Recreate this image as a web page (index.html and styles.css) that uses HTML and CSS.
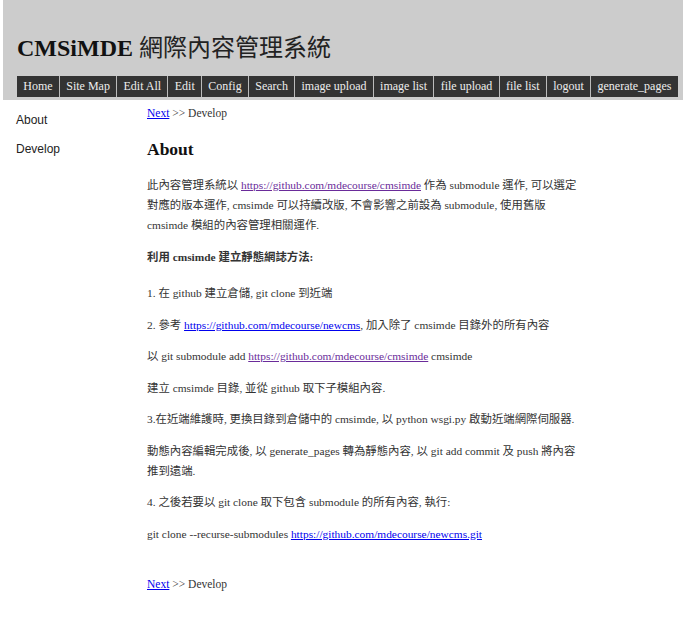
FILE: index.html
```html
<!DOCTYPE html>
<html lang="zh-Hant">
<head>
<meta charset="utf-8">
<title>CMSiMDE 網際內容管理系統</title>
<link rel="stylesheet" href="styles.css">
</head>
<body>
<div class="page">
  <header class="top">
    <h1 class="title">CMSiMDE <span class="title-cjk">網際內容管理系統</span></h1>
    <ul class="nav">
      <li><a href="#">Home</a></li>
      <li><a href="#">Site Map</a></li>
      <li><a href="#">Edit All</a></li>
      <li><a href="#">Edit</a></li>
      <li><a href="#">Config</a></li>
      <li><a href="#">Search</a></li>
      <li><a href="#">image upload</a></li>
      <li><a href="#">image list</a></li>
      <li><a href="#">file upload</a></li>
      <li><a href="#">file list</a></li>
      <li><a href="#">logout</a></li>
      <li><a href="#">generate_pages</a></li>
    </ul>
  </header>
  <div class="main">
    <aside class="side">
      <a class="side-link" href="#">About</a>
      <a class="side-link" href="#">Develop</a>
    </aside>
    <div class="content">
      <div class="pager"><a class="link" href="#">Next</a> &gt;&gt; Develop</div>
      <h2 class="heading">About</h2>
      <p class="para">此內容管理系統以 <a class="link visited" href="#">https://github.com/mdecourse/cmsimde</a> 作為 submodule 運作, 可以選定<br>對應的版本運作, cmsimde 可以持續改版, 不會影響之前設為 submodule, 使用舊版<br>cmsimde 模組的內容管理相關運作.</p>
      <p class="para strong">利用 cmsimde 建立靜態網誌方法:</p>
      <p class="para">1. 在 github 建立倉儲, git clone 到近端</p>
      <p class="para">2. 參考 <a class="link" href="#">https://github.com/mdecourse/newcms</a>, 加入除了 cmsimde 目錄外的所有內容</p>
      <p class="para">以 git submodule add <a class="link visited" href="#">https://github.com/mdecourse/cmsimde</a> cmsimde</p>
      <p class="para">建立 cmsimde 目錄, 並從 github 取下子模組內容.</p>
      <p class="para">3.在近端維護時, 更換目錄到倉儲中的 cmsimde, 以 python wsgi.py 啟動近端網際伺服器.</p>
      <p class="para">動態內容編輯完成後, 以 generate_pages 轉為靜態內容, 以 git add commit 及 push 將內容<br>推到遠端.</p>
      <p class="para">4. 之後若要以 git clone 取下包含 submodule 的所有內容, 執行:</p>
      <p class="para">git clone --recurse-submodules <a class="link" href="#">https://github.com/mdecourse/newcms.git</a></p>
      <div class="pager bottom"><a class="link" href="#">Next</a> &gt;&gt; Develop</div>
    </div>
  </div>
</div>
</body>
</html>
```
FILE: styles.css
```css
html, body {
  margin: 0;
  padding: 0;
  background: #fff;
}
.page {
  padding: 0 4px 0 3px;
  font-family: "Liberation Serif", "Noto Sans CJK TC", serif;
  color: #333;
}
.top {
  background: #cccccc;
  padding: 34px 0 3px 14px;
}
.title {
  margin: 0 0 14px 0;
  font-family: "Liberation Serif", "Noto Sans CJK TC", serif;
  font-size: 24px;
  line-height: 28px;
  font-weight: bold;
  color: #111;
}
.title-cjk {
  font-weight: normal;
  color: #222;
}
.nav {
  list-style: none;
  margin: 0;
  padding: 0;
  display: flex;
}
.nav li {
  background: #333;
  border-left: 1px solid #bbb;
}
.nav li:first-child {
  border-left: none;
}
.nav a {
  display: block;
  padding: 0 6.3px;
  line-height: 21px;
  font-size: 12px;
  color: #eee;
  text-decoration: none;
}
.main {
  display: flex;
}
.side {
  width: 131px;
  padding: 12px 0 0 13px;
  display: flex;
  flex-direction: column;
  gap: 12px;
}
.side-link {
  font-family: "Liberation Sans", "Noto Sans CJK TC", sans-serif;
  font-size: 12px;
  line-height: 17px;
  color: #222;
  text-decoration: none;
}
.content {
  flex: 1;
  padding-top: 6px;
  font-size: 11.4px;
}
.pager {
  font-size: 11.5px;
  line-height: 15px;
}
.pager.bottom {
  margin-top: 33px;
}
.heading {
  margin: 17px 0 15px 0;
  font-size: 17.5px;
  line-height: 22px;
  font-weight: bold;
  color: #111;
}
.para {
  margin: 11.5px 0;
  line-height: 20px;
  font-size: 11.4px;
}
.para.strong {
  font-weight: bold;
  margin: 12px 0 16px;
}
.link {
  color: #0000ee;
}
.link.visited {
  color: #6a2b9a;
}
```
